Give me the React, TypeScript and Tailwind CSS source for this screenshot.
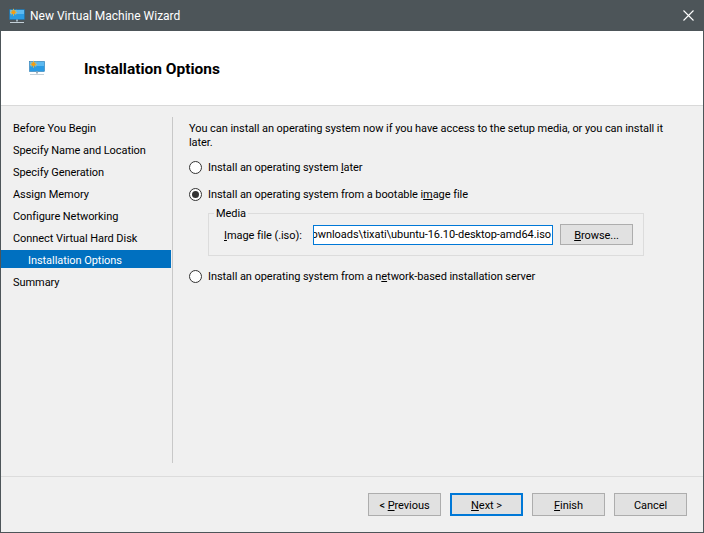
import React from "react";

const steps = [
  "Before You Begin",
  "Specify Name and Location",
  "Specify Generation",
  "Assign Memory",
  "Configure Networking",
  "Connect Virtual Hard Disk",
  "Installation Options",
  "Summary",
];

function VmIcon() {
  return (
    <svg width="16" height="16" viewBox="0 0 16 16" className="shrink-0">
      <rect x="0.5" y="1.5" width="15" height="10" fill="#2a9be4" stroke="#1b6fa8" strokeWidth="0.5" />
      <rect x="1" y="2" width="14" height="4" fill="#5cb9f0" />
      <rect x="7" y="11.5" width="2" height="2" fill="#9fb0bc" />
      <rect x="1" y="14" width="14" height="1" fill="#c4d0d8" />
      <path d="M4.5 0.8v7M1 4.3h7M2 1.8l5 5M7 1.8l-5 5" stroke="#f9c23c" strokeWidth="0.8" />
      <circle cx="4.5" cy="4.3" r="2" fill="#f39c12" />
    </svg>
  );
}

function Radio({ checked, children }: { checked?: boolean; children: React.ReactNode }) {
  return (
    <div className="flex items-center gap-[6px] h-[16px]">
      <div className="w-[13px] h-[13px] rounded-full border border-[#333333] bg-white flex items-center justify-center">
        {checked && <div className="w-[7px] h-[7px] rounded-full bg-[#333333]" />}
      </div>
      <span className="pt-[1px]">{children}</span>
    </div>
  );
}

function WizButton({ children, primary }: { children: React.ReactNode; primary?: boolean }) {
  return (
    <button
      className={
        primary
          ? "w-[73px] h-[23px] pt-[2px] bg-[#e1e1e1] border-2 border-[#0078d7] text-black"
          : "w-[73px] h-[23px] pt-[2px] bg-[#e1e1e1] border border-[#adadad] text-black"
      }
    >
      {children}
    </button>
  );
}

export default function App() {
  return (
    <div className="w-[704px] h-[533px] flex flex-col bg-[#f0f0f0] border border-t-0 border-[#4d5559] font-['Roboto',sans-serif] text-[11px] tracking-[-0.06px] leading-[14px] text-black overflow-hidden">
      <div className="h-[31px] shrink-0 bg-[#4d5559] text-white flex items-center pl-[9px] pr-[10px] gap-[5px] -mx-px text-[12px] tracking-normal">
        <VmIcon />
        <span className="flex-1">New Virtual Machine Wizard</span>
        <svg width="11" height="11" viewBox="0 0 11 11">
          <path d="M0.5 0.5l10 10M10.5 0.5l-10 10" stroke="#ffffff" strokeWidth="1.1" />
        </svg>
      </div>

      <div className="h-[74px] shrink-0 bg-white border-b border-[#d9d9d9] flex items-center pl-[28px] box-content">
        <VmIcon />
        <h1 className="ml-[39px] mt-[2px] text-[15.5px] tracking-normal font-bold">Installation Options</h1>
      </div>

      <div className="flex-1 flex pt-[11px]">
        <nav className="w-[170px] shrink-0 h-[346px]">
          {steps.map((step) =>
            step === "Installation Options" ? (
              <div key={step} className="h-[22px] pt-[1px]">
                <div className="w-full h-[18px] bg-[#0070c0] text-white pl-[27px] pt-[4px]">{step}</div>
              </div>
            ) : (
              <div key={step} className="h-[22px] pl-[12px] pt-[5px]">
                {step}
              </div>
            )
          )}
        </nav>
        <div className="w-px h-[346px] bg-[#c8c8c8] ml-[1px]" />
        <div className="flex-1 pl-[16px] pr-[10px] pt-[5px]">
          <p>You can install an operating system now if you have access to the setup media, or you can install it<br />later.</p>
          <div className="mt-[9px] flex flex-col">
            <Radio>Install an operating system <u>l</u>ater</Radio>
            <div className="mt-[11px]">
              <Radio checked>Install an operating system from a bootable i<u>m</u>age file</Radio>
            </div>
            <div className="relative mt-[11px] ml-[19px] w-[436px] h-[43px] border border-[#dcdcdc] pl-[15px] flex items-center">
              <span className="absolute -top-[7px] left-[5px] px-[2px] bg-[#f0f0f0]">Media</span>
              <div className="flex items-center w-full">
                <span className="w-[89px] pt-[2px]"><u>I</u>mage file (.iso):</span>
                <div className="w-[240px] h-[20px] bg-white border border-[#0078d7] overflow-hidden flex items-center justify-end pr-[1px] pt-[1px] whitespace-nowrap">
                  <span className="shrink-0">ownloads\tixati\ubuntu-16.10-desktop-amd64.iso</span>
                </div>
                <button className="ml-[7px] w-[73px] h-[21px] pt-[2px] bg-[#e1e1e1] border border-[#adadad]"><u>B</u>rowse...</button>
              </div>
            </div>
            <div className="mt-[12px]">
              <Radio>Install an operating system from a n<u>e</u>twork-based installation server</Radio>
            </div>
          </div>
        </div>
      </div>

      <div className="h-[56px] shrink-0 border-t border-[#dcdcdc] flex justify-end gap-[9px] pt-[16px] pr-[16px]">
        <WizButton>&lt; <u>P</u>revious</WizButton>
        <WizButton primary><u>N</u>ext &gt;</WizButton>
        <WizButton><u>F</u>inish</WizButton>
        <WizButton>Cancel</WizButton>
      </div>
    </div>
  );
}
